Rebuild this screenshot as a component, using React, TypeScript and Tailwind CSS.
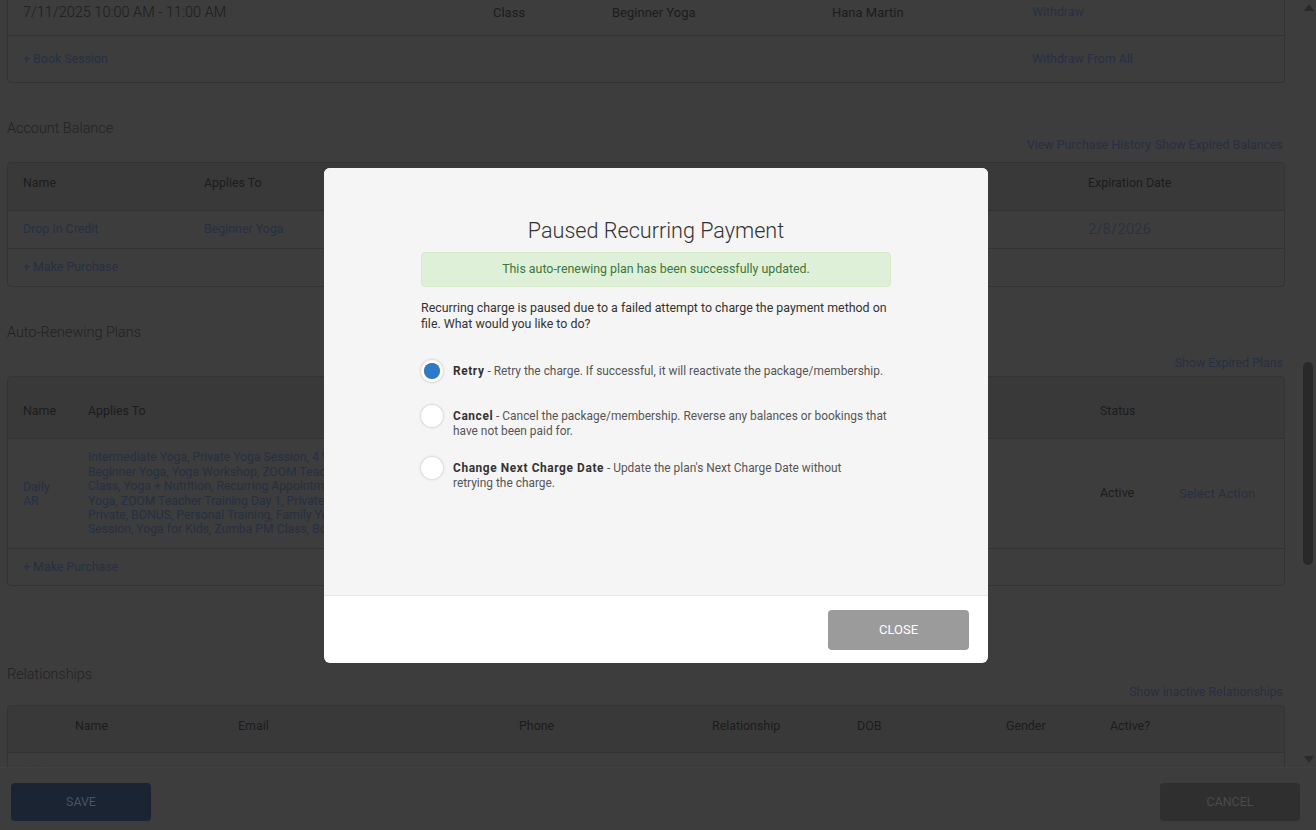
const font = { fontFamily: 'Roboto, "Liberation Sans", sans-serif' };

function ScrollArrow({ up }: { up?: boolean }) {
  return (
    <svg width="10" height="7" viewBox="0 0 10 7" className="mx-auto">
      <path d={up ? 'M0 7 L5 0 L10 7 Z' : 'M0 0 L5 7 L10 0 Z'} fill="#2a2a2a" />
    </svg>
  );
}

function Radio({ checked }: { checked?: boolean }) {
  return (
    <span className="w-[22px] h-[22px] shrink-0 rounded-full bg-white shadow-[0_0_2px_1px_rgba(0,0,0,0.12)] flex items-center justify-center">
      {checked && <span className="w-[16px] h-[16px] rounded-full bg-[#2f7bc8] shadow-[inset_0_0_1px_rgba(0,0,0,0.4)]" />}
    </span>
  );
}

export default function App() {
  return (
    <div className="relative w-[1316px] h-[830px] overflow-hidden bg-[#3d3d3d] text-[#1c1c1c] text-[12.4px]" style={font}>
      {/* dimmed page behind the dialog */}
      <div className="flex h-[767px] overflow-hidden">
        <div className="flex-1 pl-[7px] pr-[16px]">
          {/* Sessions */}
          <div className="mt-[-11px] border border-[#333333] rounded-[4px]">
            <div className="h-[46px] px-[15px] grid grid-cols-[470px_119px_220px_200px_1fr] items-center border-b border-[#333333]">
              <span className="text-[14.5px] font-light">7/11/2025 10:00 AM - 11:00 AM</span>
              <span className="text-[13px]">Class</span>
              <span className="text-[13px]">Beginner Yoga</span>
              <span className="text-[13px]">Hana Martin</span>
              <span className="text-[#263042]">Withdraw</span>
            </div>
            <div className="h-[46px] px-[15px] grid grid-cols-[1009px_1fr] items-center text-[#263042]">
              <span>+ Book Session</span>
              <span>Withdraw From All</span>
            </div>
          </div>

          {/* Account Balance */}
          <div className="mt-[37px] text-[14.4px] leading-[18px] font-light text-[#222]">Account Balance</div>
          <div className="mt-[-1px] h-[16px] leading-[16px] text-right text-[#263042] pr-[2px]">
            View Purchase History <span className="ml-[1px]">Show Expired Balances</span>
          </div>
          <div className="mt-[9px] border border-[#333333] rounded-[4px]">
            <div className="h-[48px] pt-[12px] leading-[16px] px-[15px] grid grid-cols-[181px_884px_1fr] bg-[#393939] border-b border-[#333333] rounded-t-[4px]">
              <span>Name</span>
              <span>Applies To</span>
              <span>Expiration Date</span>
            </div>
            <div className="h-[38px] px-[15px] grid grid-cols-[181px_884px_1fr] items-center border-b border-[#333333] text-[#263042]">
              <span>Drop In Credit</span>
              <span>Beginner Yoga</span>
              <span className="text-[15px] text-[#2a3242]">2/8/2026</span>
            </div>
            <div className="h-[37px] px-[15px] flex items-center text-[#263042]">+ Make Purchase</div>
          </div>

          {/* Auto-Renewing Plans */}
          <div className="mt-[37px] text-[14.4px] leading-[18px] font-light text-[#222]">Auto-Renewing Plans</div>
          <div className="mt-[13px] h-[16px] leading-[16px] text-right text-[#263042] pr-[2px]">Show Expired Plans</div>
          <div className="mt-[5px] border border-[#333333] rounded-[4px]">
            <div className="h-[62px] pt-[26px] px-[15px] grid grid-cols-[65px_1012px_79px_1fr] leading-[16px] bg-[#393939] border-b border-[#333333] rounded-t-[4px]">
              <span>Name</span>
              <span>Applies To</span>
              <span>Status</span>
              <span />
            </div>
            <div className="h-[110px] px-[15px] grid grid-cols-[65px_1012px_79px_1fr] items-center border-b border-[#333333]">
              <span className="leading-[14px] text-[#263042]">
                Daily
                <br />
                AR
              </span>
              <span className="text-[12.2px] leading-[14.4px] whitespace-nowrap text-[#263042]">
                Intermediate Yoga, Private Yoga Session, 4 Week Series, Hot Yoga, Yoga Teacher Training, Vinyasa Flow,
                <br />
                Beginner Yoga, Yoga Workshop, ZOOM Teacher Training Day 2, Meditation, Restorative Yoga, Group
                <br />
                Class, Yoga + Nutrition, Recurring Appointment, Pilates Mat Class, Advanced Yoga, Beginner
                <br />
                Yoga, ZOOM Teacher Training Day 1, Private Session, Kids Yoga Camp, Prenatal Yoga, Semi-
                <br />
                Private, BONUS, Personal Training, Family Yoga, Sound Bath, Aerial Yoga, Group
                <br />
                Session, Yoga for Kids, Zumba PM Class, Boxing
              </span>
              <span>Active</span>
              <span className="text-[13px] text-[#263042]">Select Action</span>
            </div>
            <div className="h-[36px] px-[15px] flex items-center text-[#263042]">+ Make Purchase</div>
          </div>

          {/* Relationships */}
          <div className="mt-[80px] text-[14.4px] leading-[18px] font-light text-[#222]">Relationships</div>
          <div className="h-[16px] leading-[16px] text-right text-[#263042] pr-[2px]">Show inactive Relationships</div>
          <div className="mt-[5px] border border-[#333333] rounded-[4px]">
            <div className="h-[47px] pt-[12px] grid grid-cols-[67px_163px_281px_193px_145px_149px_104px_1fr] leading-[16px] bg-[#393939] border-b border-[#333333] rounded-t-[4px]">
              <span />
              <span>Name</span>
              <span>Email</span>
              <span>Phone</span>
              <span>Relationship</span>
              <span>DOB</span>
              <span>Gender</span>
              <span>Active?</span>
            </div>
            <div className="h-[48px] pl-[17px] pt-[12px]">
              <span className="block w-[22px] h-[22px] rounded-full border border-[#363636] bg-[#404040]" />
            </div>
          </div>
        </div>

        {/* scrollbar */}
        <div className="w-[15px] flex flex-col pt-[4px] pb-[4px]">
          <ScrollArrow up />
          <div className="flex-1 px-[2px]">
            <div className="mt-[351px] h-[203px] w-[10px] rounded-full bg-[#292929]" />
          </div>
          <ScrollArrow />
        </div>
      </div>

      {/* page footer */}
      <div className="h-[63px] border-t border-[#424242] flex items-start justify-between pt-[15px] pl-[11px] pr-[16px]">
        <button className="w-[140px] h-[38px] rounded-[4px] bg-[#1b2432] text-[#485262] text-[12.4px]">SAVE</button>
        <button className="w-[140px] h-[38px] rounded-[4px] bg-[#2f2f2f] text-[#4a4a4a] text-[12.4px]">CANCEL</button>
      </div>

      {/* dialog */}
      <div className="absolute inset-0 flex items-center justify-center pr-[4px]">
        <div className="w-[664px] h-[495px] rounded-[6px] overflow-hidden bg-white flex flex-col">
          <div className="h-[427px] bg-[#f5f5f5] px-[97px] pt-[49px] text-[12.4px] text-[#333]">
            <h2 className="text-[21.6px] leading-[28px] font-light text-center text-[#333]">Paused Recurring Payment</h2>
            <div className="mt-[7px] h-[35px] flex items-center justify-center rounded-[4px] bg-[#dff0d8] border border-[#d6e9c6] text-[#3c763d]">
              This auto-renewing plan has been successfully updated.
            </div>
            <p className="mt-[13px] pr-[2px] leading-[16px]">
              Recurring charge is paused due to a failed attempt to charge the payment method on file. What would you like to do?
            </p>

            <label className="mt-[28px] flex gap-[10px] text-[11.9px]">
              <Radio checked />
              <span className="pt-[4px] leading-[15px] text-[#555]">
                <b className="text-[#333] tracking-[0.6px]">Retry</b> - Retry the charge. If successful, it will reactivate the package/membership.
              </span>
            </label>
            <label className="mt-[23px] flex gap-[10px] text-[11.9px]">
              <Radio />
              <span className="pt-[4px] leading-[15px] text-[#555]">
                <b className="text-[#333] tracking-[0.6px]">Cancel</b> - Cancel the package/membership. Reverse any balances or bookings that have not been paid for.
              </span>
            </label>
            <label className="mt-[18px] flex gap-[10px] text-[11.9px]">
              <Radio />
              <span className="pt-[4px] leading-[15px] text-[#555]">
                <b className="text-[#333] tracking-[0.6px]">Change Next Charge Date</b> - Update the plan's Next Charge Date without
                <br />
                retrying the charge.
              </span>
            </label>
          </div>
          <div className="flex-1 border-t border-[#e6e6e6] flex items-start justify-end pt-[14px] pr-[19px]">
            <button className="w-[141px] h-[40px] rounded-[4px] bg-[#9b9b9b] text-white text-[13px]">CLOSE</button>
          </div>
        </div>
      </div>
    </div>
  );
}
